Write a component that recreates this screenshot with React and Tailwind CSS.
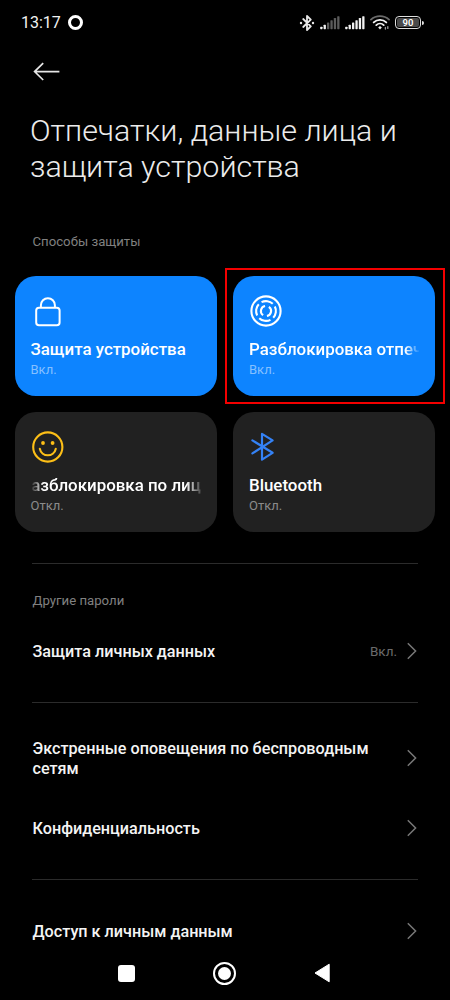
import React from "react";

function StatusBluetooth() {
  return (
    <svg width="16" height="18" viewBox="0 0 16 18" fill="none" stroke="#e8e8e8" strokeWidth="1.8" strokeLinejoin="round" strokeLinecap="round">
      <path d="M4.2 5 11.8 12.3 8 16V2l3.8 3.7L4.2 13" />
      <circle cx="2" cy="9" r="1.2" fill="#e8e8e8" stroke="none" />
      <circle cx="14" cy="9" r="1.2" fill="#e8e8e8" stroke="none" />
    </svg>
  );
}

function Signal({ level }) {
  const heights = [2.5, 4.5, 6.7, 9, 11.2, 13];
  return (
    <svg width="20" height="14" viewBox="0 0 20 14">
      {heights.map((h, i) => (
        <rect key={h} x={0.2 + i * 3.4} y={13.2 - h} width="2.3" height={h} rx="0.6" fill={i < level ? "#f2f2f2" : "#5c5c5c"} />
      ))}
    </svg>
  );
}

function Wifi() {
  return (
    <svg width="20" height="15" viewBox="0 0 20 15" fill="none" strokeWidth="1.9" strokeLinecap="round">
      <path d="M1 4.6C6 0 14 0 19 4.6" stroke="#6a6a6a" />
      <path d="M3.7 7.4C7.2 4 12.8 4 16.3 7.4" stroke="#f2f2f2" />
      <path d="M6.3 10.1C8.4 8.1 11.6 8.1 13.7 10.1" stroke="#f2f2f2" />
      <path d="M8.2 12.4 10 11.1l1.8 1.3L10 14.6z" fill="#f2f2f2" />
      <path d="M15.4 14V12.4M17.8 11.6v1.8" stroke="#9a9a9a" strokeWidth="1.3" />
    </svg>
  );
}

function Battery() {
  return (
    <div className="flex items-center">
      <div className="flex h-[13px] w-[26px] items-center justify-center rounded-[4px] border-[1.5px] border-[#dedede] p-px">
        <div className="flex h-full w-full items-center justify-center rounded-[2px] bg-[#4a4a4a] text-[9.5px] leading-none font-semibold text-white">90</div>
      </div>
      <div className="ml-px h-[4px] w-[2px] rounded-r-sm bg-[#dedede]" />
    </div>
  );
}

function LockIcon() {
  return (
    <svg width="34" height="34" viewBox="0 0 34 34" fill="none" stroke="#fff" strokeWidth="2">
      <rect x="5.2" y="13.7" width="23.4" height="17.6" rx="2.8" />
      <path d="M9.9 13.5V11.2a7 7 0 0 1 14 0V13.5" />
    </svg>
  );
}

function FingerprintIcon() {
  return (
    <svg width="34" height="34" viewBox="0 0 34 34" fill="none" stroke="#fff" strokeWidth="2.1">
      <circle cx="17" cy="17" r="14.6" />
      <circle cx="17" cy="17" r="9.9" pathLength="100" strokeDasharray="19.5 5.5" strokeDashoffset="9.7" transform="rotate(8 17 17)" />
      <circle cx="17" cy="17" r="5.1" pathLength="100" strokeDasharray="37 13" strokeDashoffset="18.5" transform="rotate(12 17 17)" />
    </svg>
  );
}

function SmileIcon() {
  return (
    <svg width="34" height="34" viewBox="0 0 34 34" fill="none" stroke="#fdbf17" strokeWidth="2.1" strokeLinecap="round">
      <circle cx="16.8" cy="17" r="14.6" />
      <path d="M8.8 18.7c1.8 8.8 14.2 8.8 16 0" />
      <circle cx="12" cy="13" r="1.9" fill="#fdbf17" stroke="none" />
      <circle cx="21.6" cy="13" r="1.9" fill="#fdbf17" stroke="none" />
    </svg>
  );
}

function BluetoothIcon() {
  return (
    <svg width="34" height="34" viewBox="0 0 34 34" fill="none" stroke="#3482f6" strokeWidth="2.2" strokeLinejoin="round" strokeLinecap="round">
      <path d="M3.4 10.4 23.6 22.8 13 29.7V3.9L23.6 10.4 3.4 23.4" />
    </svg>
  );
}

function Card({ icon, title, status, active, fade }) {
  return (
    <div className={`flex h-[119.5px] flex-col rounded-[21px] px-4 pt-[18px] ${active ? "bg-[#0d84ff]" : "bg-[#212121]"}`}>
      {icon}
      <div className={`mt-[10px] overflow-hidden text-[16.9px] leading-[22px] font-medium whitespace-nowrap text-white ${fade || ""}`}>{title}</div>
      <div className={`mt-px text-[13px] leading-[18px] ${active ? "text-[#85c0ff]" : "text-[#8b8b8b]"}`}>{status}</div>
    </div>
  );
}

function Row({ label, value, className }) {
  return (
    <div className={`flex shrink-0 items-center justify-between ${className}`}>
      <div className="w-[345px] pt-[2px] pl-[0.5px] text-[16.2px] leading-5 font-medium text-[#f4f4f4]">{label}</div>
      <div className="mr-px flex items-center gap-[10px]">
        {value && <span className="pt-px text-[13.5px] text-[#6b6b6b]">{value}</span>}
        <svg width="10" height="18" viewBox="0 0 10 18" fill="none" stroke="#777" strokeWidth="1.5">
          <path d="M0.8 1.2 8.6 9 0.8 16.8" />
        </svg>
      </div>
    </div>
  );
}

function Divider() {
  return <div className="h-px shrink-0 bg-[#2b2b2b]" />;
}

export default function App() {
  return (
    <div className="flex h-[1000px] w-[450px] flex-col overflow-hidden bg-black font-['Roboto',sans-serif]">
      <header className="flex h-[45px] shrink-0 items-center justify-between pr-[26px] pl-[21px]">
        <div className="flex items-center gap-[7px]">
          <span className="pt-px text-[16px] text-[#f2f2f2]">13:17</span>
          <span className="h-[15px] w-[15px] rounded-full border-[3px] border-white" />
        </div>
        <div className="flex items-center gap-[5px]">
          <StatusBluetooth />
          <Signal level={2} />
          <Signal level={6} />
          <Wifi />
          <Battery />
        </div>
      </header>

      <div className="flex h-[68px] shrink-0 pt-[17px] pl-[33px]">
        <svg width="28" height="20" viewBox="0 0 28 20" fill="none" stroke="#e6e6e6" strokeWidth="1.7">
          <path d="M10.2 1.2 1.6 9.6l8.6 8.4M1.6 9.6H26.4" />
        </svg>
      </div>

      <h1 className="h-[117px] shrink-0 pl-[30px] text-[30.4px] leading-9 font-light whitespace-nowrap text-[#ececec]">
        Отпечатки, данные лица и
        <br />
        защита устройства
      </h1>

      <h2 className="h-[46px] shrink-0 pl-[32.5px] text-[13.2px] leading-6 text-[#808080]">Способы защиты</h2>

      <main className="relative grid shrink-0 grid-cols-2 gap-x-[16.5px] gap-y-[16.5px] pr-[15px] pl-[14.5px]">
        <Card icon={<LockIcon />} title="Защита устройства" status="Вкл." active />
        <Card
          icon={<FingerprintIcon />}
          title="Разблокировка отпечатком"
          status="Вкл."
          active
          fade="[mask-image:linear-gradient(to_right,black_156px,transparent_171px)]"
        />
        <Card
          icon={<SmileIcon />}
          title={<span className="-ml-[10px]">Разблокировка по лицу</span>}
          status="Откл."
          fade="[mask-image:linear-gradient(to_right,transparent,black_12px,black_155px,transparent_173px)]"
        />
        <Card icon={<BluetoothIcon />} title="Bluetooth" status="Откл." />
        <div className="absolute -top-2 left-[225px] h-[136px] w-[220px] border-2 border-[#f40000]" />
      </main>

      <div className="mt-[31.5px] flex h-[383px] shrink-0 flex-col px-8">
        <Divider />
        <h2 className="mt-[25px] shrink-0 pl-[0.5px] text-[13.2px] leading-6 text-[#808080]">Другие пароли</h2>
        <Row label="Защита личных данных" value="Вкл." className="mt-[18px] mb-[31px] h-10" />
        <Divider />
        <Row label="Экстренные оповещения по беспроводным сетям" className="mt-[35px] h-10" />
        <Row label="Конфиденциальность" className="mt-[30px] mb-[31px] h-10" />
        <Divider />
        <Row label="Доступ к личным данным" className="mt-[36px] h-[30px]" />
      </div>

      <nav className="flex h-[54px] shrink-0 items-center bg-black pl-[118px]">
        <div className="h-[17px] w-[17px] rounded-[3px] bg-white" />
        <div className="ml-[78px] flex h-[23px] w-[23px] items-center justify-center rounded-full border-2 border-white">
          <div className="h-[13px] w-[13px] rounded-full bg-white" />
        </div>
        <svg className="ml-[78px]" width="17" height="20" viewBox="0 0 17 20">
          <path d="M15.2 1.2v17.6L1 10z" fill="#fff" stroke="#fff" strokeWidth="1" strokeLinejoin="round" />
        </svg>
      </nav>
    </div>
  );
}
